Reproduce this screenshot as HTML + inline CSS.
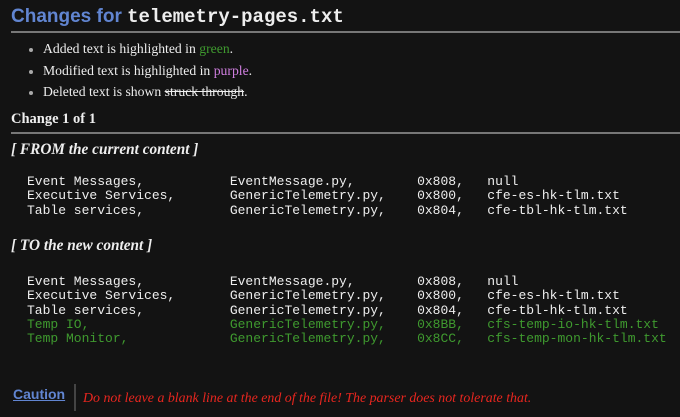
<!DOCTYPE html><html><head><style>
body{margin:0;background:#131313;color:#eee;font-family:"Liberation Serif",serif;font-size:13.7px;width:680px;height:417px;overflow:hidden;position:relative}
.a{position:absolute;white-space:pre}
h1{position:absolute;left:11px;top:6px;margin:0;font:bold 19px "Liberation Sans",sans-serif;color:#6185d1;white-space:nowrap}
h1 code{font:bold 19px "Liberation Mono",monospace;color:#eee}
.hr{position:absolute;left:11px;width:669px;height:2px;background:#777}
.m{font-family:"Liberation Mono",monospace;font-size:13px;line-height:14.3px}
.g{color:#3f9a2f}
.dot{position:absolute;left:-14px;top:7px;width:4px;height:4px;border-radius:50%;background:#aaa}
</style></head><body>
<h1>Changes for <code>telemetry-pages.txt</code></h1>
<div class="hr" style="top:31px"></div>
<div class="a" style="left:43px;top:41px"><span class="dot"></span>Added text is highlighted in <span style="color:#3f9a2f">green</span>.</div>
<div class="a" style="left:43px;top:63px"><span class="dot"></span>Modified text is highlighted in <span style="color:#d07fe0">purple</span>.</div>
<div class="a" style="left:43px;top:84px"><span class="dot"></span>Deleted text is shown <s>struck through</s>.</div>
<div class="a" style="left:11px;top:111px;font-weight:bold;font-size:14.5px">Change 1 of 1</div>
<div class="hr" style="top:132px"></div>
<div class="a" style="left:11px;top:141px;font-weight:bold;font-style:italic;font-size:15.3px">[ FROM the current content ]</div>
<div class="a m" style="left:27px;top:175px">Event Messages,           EventMessage.py,        0x808,   null
Executive Services,       GenericTelemetry.py,    0x800,   cfe-es-hk-tlm.txt
Table services,           GenericTelemetry.py,    0x804,   cfe-tbl-hk-tlm.txt</div>
<div class="a" style="left:11px;top:237px;font-weight:bold;font-style:italic;font-size:15.3px">[ TO the new content ]</div>
<div class="a m" style="left:27px;top:275px">Event Messages,           EventMessage.py,        0x808,   null
Executive Services,       GenericTelemetry.py,    0x800,   cfe-es-hk-tlm.txt
Table services,           GenericTelemetry.py,    0x804,   cfe-tbl-hk-tlm.txt
<span class="g">Temp IO,                  GenericTelemetry.py,    0x8BB,   cfs-temp-io-hk-tlm.txt
Temp Monitor,             GenericTelemetry.py,    0x8CC,   cfs-temp-mon-hk-tlm.txt</span></div>
<div class="a" style="left:13px;top:386px;font:bold 14px 'Liberation Sans',sans-serif;color:#6185d1;text-decoration:underline">Caution</div>
<div class="a" style="left:74px;top:384px;width:2px;height:27px;background:#444"></div>
<div class="a" style="left:83px;top:391px;font-style:italic;color:#e8261f;font-size:13.9px">Do not leave a blank line at the end of the file! The parser does not tolerate that.</div>
</body></html>
